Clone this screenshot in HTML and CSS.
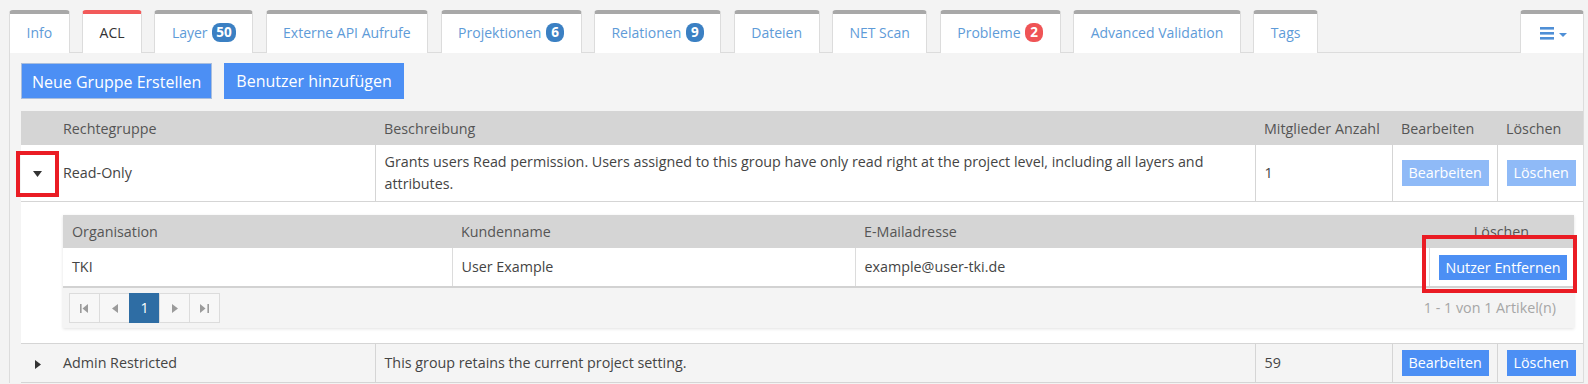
FILE: index.html
```html
<!DOCTYPE html>
<html lang="de">
<head>
  <meta charset="UTF-8" />
  <meta name="viewport" content="width=device-width, initial-scale=1.0"/>
  <title>ACL</title>
  <link rel="stylesheet" href="styles.css">
</head>
<body>
  <div class="page">
    <ul class="tabs">
      <li class="tab">Info</li>
      <li class="tab active">ACL</li>
      <li class="tab">Layer <span class="badge">50</span></li>
      <li class="tab">Externe API Aufrufe</li>
      <li class="tab">Projektionen <span class="badge">6</span></li>
      <li class="tab">Relationen <span class="badge">9</span></li>
      <li class="tab">Dateien</li>
      <li class="tab">NET Scan</li>
      <li class="tab">Probleme <span class="badge badge-red">2</span></li>
      <li class="tab">Advanced Validation</li>
      <li class="tab">Tags</li>
      <li class="tab tab-menu">
        <svg width="28" height="14" viewBox="0 0 28 14">
          <rect x="0" y="0" width="14" height="2.6" fill="#4f8fd6"/>
          <rect x="0" y="5" width="14" height="2.6" fill="#4f8fd6"/>
          <rect x="0" y="10" width="14" height="2.6" fill="#4f8fd6"/>
          <polygon points="19,6 27,6 23,10" fill="#4f8fd6"/>
        </svg>
      </li>
    </ul>

    <div class="panel">
      <div class="toolbar">
        <button class="btn btn-lg btn-focus">Neue Gruppe Erstellen</button>
        <button class="btn btn-lg">Benutzer hinzufügen</button>
      </div>

      <table class="grid">
        <colgroup>
          <col style="width:33px">
          <col style="width:321px">
          <col style="width:880px">
          <col style="width:137px">
          <col style="width:105px">
          <col>
        </colgroup>
        <thead>
          <tr>
            <th></th>
            <th>Rechtegruppe</th>
            <th>Beschreibung</th>
            <th>Mitglieder Anzahl</th>
            <th>Bearbeiten</th>
            <th>Löschen</th>
          </tr>
        </thead>
        <tbody>
          <tr>
            <td class="toggle">
              <svg width="9" height="6" viewBox="0 0 9 6"><polygon points="0,0 9,0 4.5,6" fill="#333"/></svg>
              <span class="mark mark-toggle"></span>
            </td>
            <td class="no-line">Read-Only</td>
            <td>Grants users Read permission. Users assigned to this group have only read right at the project level, including all layers and attributes.</td>
            <td>1</td>
            <td><button class="btn btn-light">Bearbeiten</button></td>
            <td><button class="btn btn-light">Löschen</button></td>
          </tr>
          <tr class="detail">
            <td class="toggle"></td>
            <td colspan="5" class="no-line detail-cell">
              <div class="subgrid">
                <table class="subtable">
                  <colgroup>
                    <col style="width:389px">
                    <col style="width:403px">
                    <col style="width:574px">
                    <col>
                  </colgroup>
                  <thead>
                    <tr>
                      <th>Organisation</th>
                      <th>Kundenname</th>
                      <th>E-Mailadresse</th>
                      <th class="center">Löschen</th>
                    </tr>
                  </thead>
                  <tbody>
                    <tr>
                      <td>TKI</td>
                      <td>User Example</td>
                      <td>example@user-tki.de</td>
                      <td class="center">
                        <button class="btn btn-sm">Nutzer Entfernen</button>
                        <span class="mark mark-remove"></span>
                      </td>
                    </tr>
                  </tbody>
                </table>
                <div class="pager">
                  <div class="pager-nav">
                    <span class="page-btn">
                      <svg width="9" height="9" viewBox="0 0 9 9"><rect x="0" y="0" width="1.6" height="9" fill="#9b9b9b"/><polygon points="8,0 8,9 2.5,4.5" fill="#9b9b9b"/></svg>
                    </span>
                    <span class="page-btn">
                      <svg width="6" height="9" viewBox="0 0 6 9"><polygon points="6,0 6,9 0,4.5" fill="#9b9b9b"/></svg>
                    </span>
                    <span class="page-btn current">1</span>
                    <span class="page-btn">
                      <svg width="6" height="9" viewBox="0 0 6 9"><polygon points="0,0 0,9 6,4.5" fill="#9b9b9b"/></svg>
                    </span>
                    <span class="page-btn">
                      <svg width="9" height="9" viewBox="0 0 9 9"><polygon points="0,0 0,9 5.5,4.5" fill="#9b9b9b"/><rect x="7.4" y="0" width="1.6" height="9" fill="#9b9b9b"/></svg>
                    </span>
                  </div>
                  <span class="pager-info">1 - 1 von 1 Artikel(n)</span>
                </div>
              </div>
            </td>
          </tr>
          <tr class="alt">
            <td class="toggle">
              <svg width="6" height="9" viewBox="0 0 6 9"><polygon points="0,0 6,4.5 0,9" fill="#333"/></svg>
            </td>
            <td class="no-line">Admin Restricted</td>
            <td>This group retains the current project setting.</td>
            <td>59</td>
            <td><button class="btn">Bearbeiten</button></td>
            <td><button class="btn">Löschen</button></td>
          </tr>
        </tbody>
      </table>
    </div>
  </div>
</body>
</html>
```

FILE: styles.css
```css
* {
  box-sizing: border-box;
}

body {
  margin: 0;
  background: #f3f3f3;
  font-family: 'Open Sans', 'Noto Sans', sans-serif;
  font-size: 14.3px;
  color: #444;
  overflow: hidden;
}

.page {
  padding: 10px 4px 0 9px;
}

/* tab strip */
.tabs {
  display: flex;
  list-style: none;
  margin: 0;
  padding: 0;
  height: 43px;
  border-bottom: 1px solid #dcdcdc;
}

.tab {
  height: 43px;
  margin-right: 12.4px;
  padding: 0 16.5px;
  background: #fff;
  border-top: 4px solid #a8a8a8;
  border-left: 1px solid #dcdcdc;
  border-right: 1px solid #dcdcdc;
  border-radius: 4px 4px 0 0;
  font-size: 14px;
  line-height: 38px;
  color: #5e9bd8;
  white-space: nowrap;
}

.tab.active {
  border-top-color: #f25a5a;
  color: #333;
}

.tab-menu {
  margin-left: auto;
  margin-right: 0;
  padding: 0 15px 0 19px;
  display: flex;
  align-items: center;
}

.badge {
  display: inline-block;
  min-width: 18px;
  height: 19px;
  padding: 0 4px;
  margin-left: 1px;
  border-radius: 8px;
  background: #3b80c3;
  color: #fff;
  font-size: 13.5px;
  font-weight: bold;
  line-height: 19px;
  text-align: center;
  vertical-align: 1px;
}

.badge-red {
  background: #ef5456;
}

/* content panel */
.panel {
  background: #f4f4f4;
  border-left: 1px solid #dcdcdc;
  border-right: 1px solid #dcdcdc;
  padding: 10px 0 0 11px;
}

.toolbar {
  display: flex;
  gap: 12px;
  margin-bottom: 12px;
}

.btn {
  display: inline-block;
  height: 26px;
  padding: 0 7px;
  border: none;
  background: #4c8ff4;
  color: #fff;
  font-family: inherit;
  font-size: 14.3px;
  line-height: 26px;
  white-space: nowrap;
  cursor: pointer;
}

.btn-lg {
  height: 36px;
  padding: 0 12px;
  font-size: 16px;
  line-height: 36px;
}

.btn-focus {
  padding: 0 10px;
  border: 1px solid #a9bedd;
}

.btn-light {
  background: #8fbaf7;
}

.btn-sm {
  height: 25px;
  padding: 0 7px;
  line-height: 25px;
}

/* main grid */
.grid {
  width: 100%;
  border-collapse: collapse;
  table-layout: fixed;
}

.grid > thead th {
  height: 34px;
  padding: 0 9px;
  background: #d5d5d5;
  color: #555;
  font-weight: normal;
  text-align: left;
}

.grid > tbody > tr > td {
  padding: 6px 9px;
  line-height: 22px;
  background: #fff;
  border-bottom: 1px solid #d5d5d5;
  border-left: 1px solid #d5d5d5;
  vertical-align: middle;
}

.grid > tbody > tr > td.toggle,
.grid > tbody > tr > td.no-line {
  border-left: none;
}

.grid > tbody > tr.alt > td {
  background: #f4f4f4;
}

.toggle {
  position: relative;
  text-align: center;
}

.toggle svg {
  display: inline-block;
  vertical-align: middle;
}

.grid > tbody > tr > td.detail-cell {
  padding: 13px 9px 15px 9px;
}

/* red highlight frames */
.mark {
  position: absolute;
  border: 4px solid #ea1c24;
  pointer-events: none;
}

.mark-toggle {
  left: -5px;
  right: -5px;
  top: 6px;
  bottom: 4px;
}

.mark-remove {
  left: -8px;
  right: -3px;
  top: -13px;
  bottom: -7px;
}

/* nested grid */
.subgrid {
  box-shadow: 0 1px 3px rgba(0, 0, 0, 0.12);
}

.subtable {
  width: 100%;
  border-collapse: collapse;
  table-layout: fixed;
}

.subtable th {
  height: 33px;
  padding: 0 9px;
  background: #d5d5d5;
  color: #555;
  font-weight: normal;
  text-align: left;
}

.subtable td {
  position: relative;
  height: 38px;
  padding: 0 9px;
  background: #fff;
  border-left: 1px solid #dcdcdc;
  vertical-align: middle;
}

.subtable td:first-child {
  border-left: none;
}

.subtable .center {
  text-align: center;
}

.pager {
  display: flex;
  justify-content: space-between;
  align-items: center;
  padding: 5px 18px 5px 6px;
  background: #f4f4f4;
  border-top: 2px solid #d2d2d2;
}

.pager-nav {
  display: flex;
}

.page-btn {
  display: flex;
  align-items: center;
  justify-content: center;
  width: 31px;
  height: 30px;
  margin-left: -1px;
  border: 1px solid #dcdcdc;
  background: #f7f7f7;
}

.page-btn:first-child {
  margin-left: 0;
}

.page-btn.current {
  background: #2e6da4;
  border-color: #2e6da4;
  color: #fff;
}

.pager-info {
  color: #a6a6a6;
}
```
